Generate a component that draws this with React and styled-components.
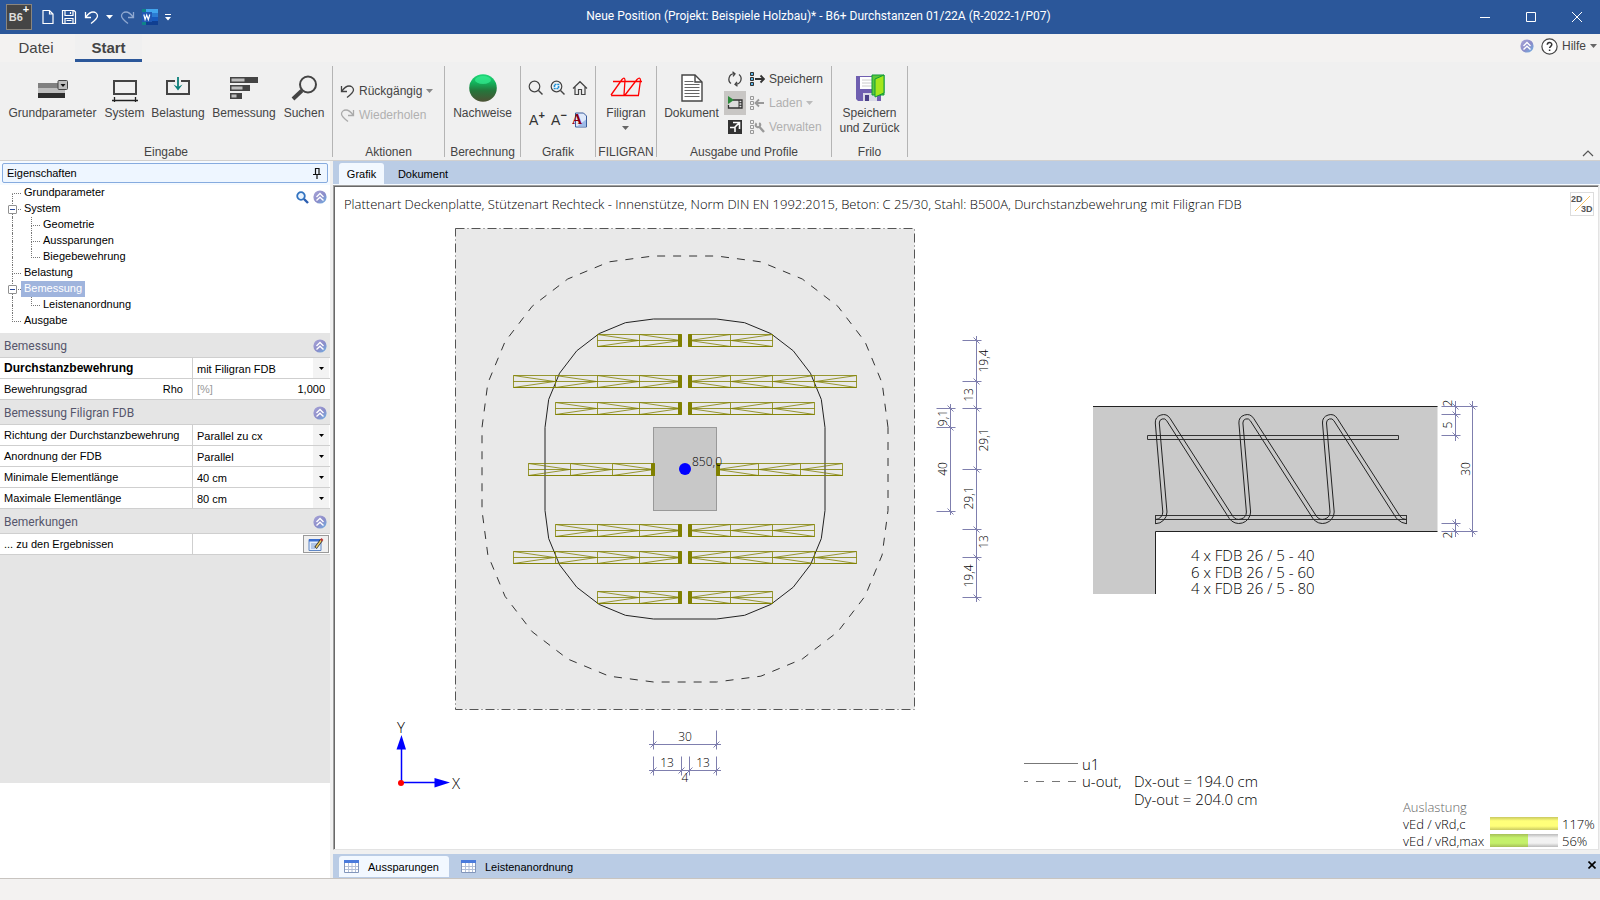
import React from 'react'
import styled, { createGlobalStyle } from 'styled-components'

const uiFont = '"Liberation Sans", Arial, sans-serif'
const segoe = '"Open Sans", "Noto Sans", sans-serif'
const captionFont = 'Roboto, "Open Sans", sans-serif'

const ROWS = [
    { y: 340, cells: 2 },
    { y: 381, cells: 4 },
    { y: 408, cells: 3 },
    { y: 469, cells: 3, middle: true },
    { y: 530, cells: 3 },
    { y: 557, cells: 4 },
    { y: 597, cells: 2 },
]

const TREE = [
    { label: 'Grundparameter', first: true },
    { label: 'System', open: true },
    { label: 'Geometrie', child: true },
    { label: 'Aussparungen', child: true },
    { label: 'Biegebewehrung', child: true, lastChild: true },
    { label: 'Belastung' },
    { label: 'Bemessung', open: true, selected: true },
    { label: 'Leistenanordnung', child: true, lastChild: true },
    { label: 'Ausgabe', last: true },
]

/* ---------- icons ---------- */

const Caret = ({ color = '#666' }) => (
    <svg width="7" height="4" viewBox="0 0 7 4"><path d="M0 0h7L3.5 4z" fill={color} /></svg>
)

const Badge = () => (
    <svg width="14" height="14" viewBox="0 0 14 14">
        <defs>
            <linearGradient id="badge" x1="0" y1="0" x2="1" y2="1">
                <stop offset="0" stopColor="#a9a5d8" />
                <stop offset=".55" stopColor="#8b8cc9" />
                <stop offset="1" stopColor="#6fb4e6" />
            </linearGradient>
        </defs>
        <circle cx="7" cy="7" r="6.6" fill="url(#badge)" />
        <path d="M3.5 7L7 3.6 10.500 7M3.500 10.600L7 7.200l3.500 3.400" fill="none" stroke="#fff" strokeWidth="1.400" />
    </svg>
)

const UndoIcon = ({ color, flip }) => (
    <svg width="15" height="16" viewBox="0 0 15 16">
        <path
            d="M1.500 3v5.500H7M1.800 8.200C4.500 4.500 6.500 3 9 3c2.500 0 4.500 1.700 4.500 4 0 2.300-1.500 3.700-6.500 7.500"
            fill="none" stroke={color} strokeWidth="1.300"
            transform={flip ? 'translate(15 0) scale(-1 1)' : undefined}
        />
    </svg>
)

const NewIcon = () => (
    <svg width="12" height="16" viewBox="0 0 12 16">
        <path d="M1 1.500h6.500L11 5v9.500H1zM7.500 1.500V5H11" fill="none" stroke="#fff" strokeWidth="1.200" />
    </svg>
)

const SaveIcon = () => (
    <svg width="16" height="16" viewBox="0 0 16 16">
        <path d="M1.500 1.500h11.500l1.500 1.500v11.500h-13zM4 1.500v5h8v-5M9.500 3v2M4 14.500V9.500h8v5M5.500 11.500h5" fill="none" stroke="#fff" strokeWidth="1.200" />
    </svg>
)

const WordIcon = () => (
    <svg width="16" height="16" viewBox="0 0 16 16">
        <path d="M0 0h16v16H0z" fill="#0e8389" />
        <path d="M4 0h12v4H4z" fill="#41a5ee" />
        <path d="M4 4h12v4H4z" fill="#2b7cd3" />
        <path d="M4 8h12v4H4z" fill="#185abd" />
        <path d="M4 12h12v4H4z" fill="#103f91" />
        <path d="M0 3h10v10H0z" fill="#2059b5" />
        <path d="M1.800 5.500l1.300 5 1.600-4.500 1.600 4.500 1.500-5" fill="none" stroke="#fff" strokeWidth="1.200" />
    </svg>
)

const ParamIcon = () => (
    <svg width="30" height="28" viewBox="0 0 30 28">
        <path d="M0 9h20v5H0z" fill="#808080" />
        <path d="M0 14h27v5H0z" fill="#bdbdbd" />
        <path d="M0 19h27v5H0z" fill="#2d2d2d" />
        <rect x="20" y="6.500" width="9.500" height="9" rx="1" fill="#bdbdbd" stroke="#444" />
        <path d="M22.500 10h5l-2.500 3z" fill="#111" />
    </svg>
)

const SystemIcon = () => (
    <svg width="28" height="28" viewBox="0 0 28 28">
        <path d="M3 7h22v13H3z" fill="none" stroke="#444" strokeWidth="2" />
        <path d="M1 26.500h26M3.500 23v5M24.500 23v5" stroke="#222" strokeWidth="1.300" />
    </svg>
)

const LoadIcon = () => (
    <svg width="28" height="28" viewBox="0 0 28 28">
        <path d="M3 7h22v13H3z" fill="none" stroke="#444" strokeWidth="2" />
        <path d="M11 5h6v4h-6z" fill="#f0f0f0" />
        <path d="M14 3v11" stroke="#0b7f7a" strokeWidth="1.800" />
        <path d="M9.500 10.500l4.500 2.500 4.500-2.500-4.500 6z" fill="#0b7f7a" />
    </svg>
)

const DesignIcon = () => (
    <svg width="30" height="28" viewBox="0 0 30 28">
        <path d="M1 3h28v6H1zM1 11h20v6H1zM1 19h12v6H1z" fill="#444" />
        <path d="M2.500 4.500h13v3h-13zM2.500 12.500h11v3h-11zM2.500 20.500h5v3h-5z" fill="#bdbdbd" />
    </svg>
)

const FindIcon = () => (
    <svg width="28" height="28" viewBox="0 0 28 28">
        <circle cx="18" cy="10.500" r="8" fill="none" stroke="#444" strokeWidth="2" />
        <path d="M12 16.500L3 25" stroke="#444" strokeWidth="4" />
    </svg>
)

const BallIcon = () => (
    <svg width="28" height="28" viewBox="0 0 28 28">
        <defs>
            <linearGradient id="ball" x1="0" y1="0" x2="0" y2="1">
                <stop offset="0" stopColor="#1fd878" />
                <stop offset=".3" stopColor="#12b45c" />
                <stop offset=".6" stopColor="#25753b" />
                <stop offset="1" stopColor="#4d5134" />
            </linearGradient>
        </defs>
        <circle cx="14" cy="14" r="13.800" fill="url(#ball)" />
        <ellipse cx="14" cy="6" rx="8" ry="4" fill="#3cf59a" opacity=".6" />
    </svg>
)

const FiligranIcon = () => (
    <svg width="34" height="24" viewBox="0 0 34 24">
        <path d="M4 5.500h29M2 19.500h28M2 19L13 3.500Q15.500.500 16 4l-1 15M16 19L28 3.500Q31 .500 31.500 4l-2 15" fill="none" stroke="#f00" strokeWidth="1.300" />
    </svg>
)

const DocIcon = () => (
    <svg width="22" height="28" viewBox="0 0 22 28">
        <path d="M1 1h13l7 7v19H1z" fill="#fff" stroke="#444" strokeWidth="1.400" />
        <path d="M14 1v7h7" fill="none" stroke="#444" strokeWidth="1.400" />
        <path d="M3.500 7.500h9M3.500 10.500h15M3.500 13.500h15M3.500 16.500h15M3.500 19.500h15M3.500 22.500h15" stroke="#666" />
    </svg>
)

const SaveBackIcon = () => (
    <svg width="30" height="28" viewBox="0 0 30 28">
        <path d="M1 2h25v25H3l-2-2z" fill="#6f5fb0" />
        <path d="M5 3h14v12H5z" fill="#fff" />
        <path d="M7 6h10M7 9h10M7 12h10" stroke="#ccc" />
        <path d="M8 19h14v8H8z" fill="#d9d9e6" />
        <path d="M10 21h4v6h-4z" fill="#4a3f86" />
        <path d="M17 1h12v20H17z" fill="#5cc83a" stroke="#0f9b38" />
        <path d="M20 5l9-4v18l-9 4z" fill="#a5e61c" stroke="#0f9b38" />
    </svg>
)

const ZoomIcon = ({ fit }) => (
    <svg width="16" height="16" viewBox="0 0 16 16">
        <circle cx="6.500" cy="6.500" r="5.300" fill="none" stroke="#444" strokeWidth="1.200" />
        <path d="M10.500 10.500l4 4" stroke="#444" strokeWidth="1.500" />
        {fit && <path d="M4.500 4.500h4v4h-4z" fill="#fff" stroke="#1d8fd6" strokeWidth="1.600" strokeDasharray="2 .7" />}
    </svg>
)

const HomeIcon = () => (
    <svg width="16" height="16" viewBox="0 0 16 16">
        <path d="M1 8.500L8 1.700l7 6.800M3 7v7.500h3.500V9.500h3v5H13V7" fill="none" stroke="#444" strokeWidth="1.200" />
    </svg>
)

const ColorDocIcon = () => (
    <svg width="16" height="16" viewBox="0 0 16 16">
        <path d="M3.500 1h8l3 3v11h-11z" fill="#dfe9fa" stroke="#3a5c9c" />
        <path d="M5 14.500h9v-7z" fill="#9dbbe8" />
        <text x="0" y="12" fontFamily="Liberation Serif, serif" fontWeight="700" fontSize="14" fill="#8b0012">A</text>
    </svg>
)

const RefreshIcon = () => (
    <svg width="16" height="16" viewBox="0 0 16 16">
        <path d="M4 12.500A5.500 5.500 0 0 1 7 2.700M12 3.500a5.500 5.500 0 0 1-3 9.800M5.500.800L8 2.800 6 5.300M10.500 15.300L8 13.300l2-2.500" fill="none" stroke="#444" strokeWidth="1.300" />
    </svg>
)

const PlayIcon = () => (
    <svg width="16" height="16" viewBox="0 0 16 16">
        <path d="M6 5h9v8H1.500V10" fill="#ddd" stroke="#333" strokeWidth="1.300" />
        <path d="M12 5v8M12 7.700h3M12 10.300h3" stroke="#333" />
        <path d="M1 1l6 4-6 4z" fill="#2b8a3a" />
    </svg>
)

const ExpandIcon = () => (
    <svg width="14" height="14" viewBox="0 0 14 14">
        <path d="M0 0h14v14H0z" fill="#333" />
        <path d="M5 2.500h6.500V9M11.500 2.500L6 8M2 7.500h5V12" fill="none" stroke="#fff" strokeWidth="1.600" />
    </svg>
)

const ProfileIcon = ({ kind }) => {
    const c = kind === 'save' ? '#333' : '#999'
    return (
        <svg width="15" height="16" viewBox="0 0 15 16">
            <path d="M.5 1.500h3v3h-3zM.5 6.500h3v3h-3zM.5 11.500h3v3h-3z" fill={kind === 'save' ? '#5ab4e6' : 'none'} stroke={c} />
            {kind === 'save' && <path d="M5 8h9M10.500 4.500L14 8l-3.500 3.500" fill="none" stroke={c} strokeWidth="1.800" />}
            {kind === 'load' && <path d="M14 8H6M9 4.500L5.500 8 9 11.500" fill="none" stroke={c} strokeWidth="1.800" />}
            {kind === 'tool' && (
                <>
                    <circle cx="8" cy="6" r="2.200" fill="none" stroke={c} strokeWidth="2" strokeDasharray="10 4" transform="rotate(-60 8 6)" />
                    <path d="M9.500 8l4.500 5" stroke={c} strokeWidth="2.400" />
                </>
            )}
        </svg>
    )
}

const HelpIcon = () => (
    <svg width="17" height="17" viewBox="0 0 17 17">
        <circle cx="8.500" cy="8.500" r="7.600" fill="#fff" stroke="#444" strokeWidth="1.200" />
        <path d="M6.300 6.800c0-3 4.500-3 4.500-.3 0 1.800-2.200 1.800-2.200 3.600M8.600 11.500v1.500" fill="none" stroke="#333" strokeWidth="1.500" />
    </svg>
)

const PinIcon = () => (
    <svg width="9" height="11" viewBox="0 0 9 11">
        <path d="M2.500 6V.5H6V6M0 6.500h8M4 6.500V11M6 0v6" fill="none" stroke="#111" strokeWidth="1.200" />
    </svg>
)

const BlueSearch = () => (
    <svg width="13" height="13" viewBox="0 0 13 13">
        <circle cx="5" cy="5" r="3.800" fill="#eaf4ff" stroke="#3273c0" strokeWidth="1.800" />
        <path d="M8 8l4 4" stroke="#2a5db0" strokeWidth="2.400" />
    </svg>
)

const NoteIcon = () => (
    <svg width="16" height="13" viewBox="0 0 16 13">
        <path d="M1 1.500h12V12.500H1z" fill="#e6effc" stroke="#5f86c4" />
        <path d="M1 1h12v2.500H1z" fill="#3a6ed0" />
        <path d="M3 6h6M3 8h5M3 10h4" stroke="#7b9ed2" />
        <path d="M7.500 10l6-8" stroke="#333" strokeWidth="3" />
        <path d="M8 9.500l5.500-7.500" stroke="#f0d060" strokeWidth="1.400" />
        <path d="M13 2.500l1.500-1.500" stroke="#b33" strokeWidth="2.500" />
    </svg>
)

const GridIcon = () => (
    <svg width="15" height="13" viewBox="0 0 15 13">
        <path d="M.5.500h14v12H.5z" fill="#fff" stroke="#8296bb" />
        <path d="M0 0h15v3H0z" fill="#4a7bdc" />
        <path d="M1 6.500h13M1 9.500h13M4.500 3v9M8 3v9M11.500 3v9" stroke="#b3c0d8" />
    </svg>
)

/* ---------- drawing ---------- */

function Leiste({ y, cells, middle }) {
    const left = middle ? 654 : 681
    const right = middle ? 716 : 688
    const shapes = []
    for (let i = 0; i < cells; i++) {
        const l = left - i * 42
        const r = right + i * 42
        shapes.push(`M${l} ${y - 6}H${l - 42}V${y + 6}H${l}L${l - 42} ${y + 6}L${l - 1} ${y}L${l - 42} ${y - 6}M${l - 42} ${y}H${l}`)
        shapes.push(`M${r} ${y - 6}H${r + 42}V${y + 6}H${r}L${r + 42} ${y + 6}L${r + 1} ${y}L${r + 42} ${y - 6}M${r + 42} ${y}H${r}`)
    }
    return (
        <g transform="translate(.5 .5)">
            <path d={shapes.join('')} fill="none" stroke="#808000" strokeWidth=".8" />
            <path d={`M${left - 3} ${y - 6}h3v12h-3zM${right} ${y - 6}h3v12h-3z`} fill="#808000" stroke="#808000" />
        </g>
    )
}

// straight sides along the column, corners in steps of 15 degrees
function perimeter(r) {
    const pts = []
    const corners = [[716.5, 427.5, 0], [653.5, 427.5, 90], [653.5, 510.5, 180], [716.5, 510.5, 270]]
    corners.forEach(([cx, cy, start]) => {
        for (let a = 0; a <= 90; a += 15) {
            const rad = ((start + a) * Math.PI) / 180
            pts.push(`${cx + r * Math.cos(rad)},${cy - r * Math.sin(rad)}`)
        }
    })
    return pts.join(' ')
}

function VDim({ x, ticks, from, to, wide }) {
    const list = ticks.map((y) => `M${wide || x - 14} ${y}H${x + 5}M${x - 3} ${y - 3}l6 6`).join('')
    return <DimLine d={`M${x} ${from}V${to}${list}`} />
}

function HDim({ y, ticks }) {
    const list = ticks.map((x) => `M${x} ${y - 14}V${y + 5}M${x - 3} ${y + 3}l6 -6`).join('')
    return <DimLine d={`M649 ${y}H721${list}`} />
}

function VText({ x, y, children }) {
    return <DimText transform={`translate(${x} ${y}) rotate(-90)`}>{children}</DimText>
}

function truss() {
    const edge = (a, b, c, d, peakR, valleyR, up, low) => {
        let s = `M1155.500 ${low}A${valleyR} ${valleyR} 0 0 0 ${up} 512`
        for (let i = 0; i < 3; i++) {
            const dx = i * 83.6
            s += `L${a + dx} 423A${peakR} ${peakR} 0 0 1 ${b + dx} ${c}L${d[0] + dx} ${d[1]}`
            s += i < 2
                ? `A${valleyR} ${valleyR} 0 0 0 ${up + dx + 83.6} 512`
                : `Q${1402} ${low} 1406.500 ${low}`
        }
        return s
    }
    return edge(1155.3, 1170, 418.3, [1232.8, 516.2], 8, 7.5, 1162.8, 519.5)
        + edge(1159.3, 1166.7, 420.7, [1229.3, 518.5], 4, 11.7, 1167, 523.7)
}

function Drawing() {
    return (
        <Sheet viewBox="334 186 1264 663" preserveAspectRatio="xMinYMin meet">
            <rect x="455.500" y="228.500" width="459" height="481" fill="#e9e9e9" stroke="#555" strokeDasharray="9 3 1 3" />
            <polygon points={perimeter(171.5)} fill="none" stroke="#333" strokeDasharray="8 8" />
            <polygon points={perimeter(108.5)} fill="none" stroke="#222" />
            <rect x="653.500" y="427.500" width="63" height="83" fill="#c8c8c8" stroke="#999" />
            {ROWS.map((row) => <Leiste key={row.y} {...row} />)}
            <circle cx="685" cy="469" r="6" fill="#00f" />
            <DimText $start x="692" y="466">850,0</DimText>

            <VDim x={976.5} from={336} to={602} ticks={[340.5, 381.5, 408.5, 469.5, 529.5, 557.5, 597.5]} />
            <VDim x={950.5} from={404} to={515} ticks={[408.5, 427.5, 511.5]} />
            <VText x={988} y={361}>19,4</VText>
            <VText x={973} y={395}>13</VText>
            <VText x={988} y={440}>29,1</VText>
            <VText x={973} y={498}>29,1</VText>
            <VText x={988} y={542}>13</VText>
            <VText x={973} y={576}>19,4</VText>
            <VText x={947} y={418}>9,1</VText>
            <VText x={947} y={469}>40</VText>

            <HDim y={744.5} ticks={[653.5, 716.5]} />
            <HDim y={770.5} ticks={[653.5, 681.5, 689.5, 716.5]} />
            <DimText x="685" y="741">30</DimText>
            <DimText x="667" y="767">13</DimText>
            <DimText x="703" y="767">13</DimText>
            <DimText x="685" y="782">4</DimText>

            <path d="M401.500 783V748M401.500 782.500H436" stroke="#00f" strokeWidth="1.500" />
            <path d="M396.500 749.500L401.500 735l4.500 14.500zM434.500 778l15.500 4.500-15.500 5z" fill="#00f" />
            <circle cx="401" cy="783" r="3" fill="#f00" />
            <NoteText x="397" y="733">Y</NoteText>
            <NoteText x="452" y="789">X</NoteText>

            <path d="M1093 406h344.500v125.500H1155.500V594H1093z" fill="#cacaca" />
            <path d="M1093 406.500H1437.500M1437.500 531.500H1155.500V594" fill="none" stroke="#222" />
            <path d="M1147.500 435.500h251v4h-251zM1155.500 515.500h251v4h-251zM1155.500 515v9M1406.500 515v9" fill="none" stroke="#333" />
            <path d={truss()} fill="none" stroke="#222" />
            <NoteText x="1191" y="561">4 x FDB 26 / 5 - 40</NoteText>
            <NoteText x="1191" y="578">6 x FDB 26 / 5 - 60</NoteText>
            <NoteText x="1191" y="594">4 x FDB 26 / 5 - 80</NoteText>

            <VDim x={1455.5} from={401} to={441} ticks={[406.5, 414.5, 435.5]} />
            <VDim x={1455.5} from={519} to={537} ticks={[523.5, 531.5]} />
            <VDim x={1472.5} from={401} to={537} ticks={[406.5, 531.5]} wide={1442} />
            <VText x={1452} y={403}>2</VText>
            <VText x={1452} y={425}>5</VText>
            <VText x={1470} y={469}>30</VText>
            <VText x={1452} y={535}>2</VText>

            <path d="M1024 763.500h54" stroke="#777" />
            <path d="M1024 781.500h54" stroke="#777" strokeDasharray="8 8" strokeDashoffset="4" />
            <NoteText x="1082" y="770">u1</NoteText>
            <NoteText x="1082" y="787">u-out,</NoteText>
            <NoteText x="1134" y="787">Dx-out = 194.0 cm</NoteText>
            <NoteText x="1134" y="805">Dy-out = 204.0 cm</NoteText>
        </Sheet>
    )
}

/* ---------- panels ---------- */

function SectionHead({ children }) {
    return (
        <SectionBar>
            <h3>{children}</h3>
            <IconButton aria-label={`${children} einklappen`}><Badge /></IconButton>
        </SectionBar>
    )
}

function SelectRow({ id, label, value, strong }) {
    return (
        <PropRow>
            <PropLabel htmlFor={id} $strong={strong}>{label}</PropLabel>
            <SelectCell>
                <select id={id} defaultValue={value}><option>{value}</option></select>
                <span><Caret color="#000" /></span>
            </SelectCell>
        </PropRow>
    )
}

function Sidebar() {
    return (
        <Side>
            <SideTitleWrap>
                <SideTitle>
                    <h2>Eigenschaften</h2>
                    <IconButton aria-label="Anheften"><PinIcon /></IconButton>
                </SideTitle>
            </SideTitleWrap>
            <Tree>
                {TREE.map((node) => (
                    <TreeRow key={node.label}>
                        <Guide $from={node.first} $to={node.last} $dash={!node.child} />
                        {node.child && <Guide $child $to={node.lastChild} $dash />}
                        {node.open && <Toggle aria-label={`${node.label} zuklappen`} />}
                        <TreeLink href="#" $selected={node.selected}>{node.label}</TreeLink>
                    </TreeRow>
                ))}
                <TreeTools>
                    <IconButton aria-label="Suchen"><BlueSearch /></IconButton>
                    <IconButton aria-label="Alles einklappen"><Badge /></IconButton>
                </TreeTools>
            </Tree>
            <SectionHead>Bemessung</SectionHead>
            <SelectRow id="durchstanz" label="Durchstanzbewehrung" value="mit Filigran FDB" strong />
            <PropRow>
                <PropLabel htmlFor="rho">Bewehrungsgrad<span>Rho</span></PropLabel>
                <NumberCell>
                    <span>[%]</span>
                    <input id="rho" defaultValue="1,000" />
                </NumberCell>
            </PropRow>
            <SectionHead>Bemessung Filigran FDB</SectionHead>
            <SelectRow id="richtung" label="Richtung der Durchstanzbewehrung" value="Parallel zu cx" />
            <SelectRow id="anordnung" label="Anordnung der FDB" value="Parallel" />
            <SelectRow id="minlen" label="Minimale Elementlänge" value="40 cm" />
            <SelectRow id="maxlen" label="Maximale Elementlänge" value="80 cm" />
            <SectionHead>Bemerkungen</SectionHead>
            <PropRow>
                <PropLabel htmlFor="notiz">... zu den Ergebnissen</PropLabel>
                <NoteCell><button id="notiz" aria-label="Bearbeiten"><NoteIcon /></button></NoteCell>
            </PropRow>
            <SideRest />
            <SideFoot />
        </Side>
    )
}

function BigButton({ icon, width, children }) {
    return (
        <Big $width={width}>
            <i>{icon}</i>
            <span>{children}</span>
        </Big>
    )
}

function Ribbon() {
    return (
        <RibbonBar>
            <Group $width={333}>
                <GroupBody $pad={3}>
                    <BigButton icon={<ParamIcon />} width={99}>Grundparameter</BigButton>
                    <BigButton icon={<SystemIcon />} width={45}>System</BigButton>
                    <BigButton icon={<LoadIcon />} width={62}>Belastung</BigButton>
                    <BigButton icon={<DesignIcon />} width={70}>Bemessung</BigButton>
                    <BigButton icon={<FindIcon />} width={50}>Suchen</BigButton>
                </GroupBody>
                <h4>Eingabe</h4>
            </Group>
            <Group $width={112}>
                <GroupBody>
                    <Stack $top={13} $pad={7}>
                        <Small><UndoIcon color="#444" />Rückgängig<Caret color="#888" /></Small>
                        <Small disabled><UndoIcon color="#aaa" flip />Wiederholen</Small>
                    </Stack>
                </GroupBody>
                <h4>Aktionen</h4>
            </Group>
            <Group $width={76}>
                <GroupBody><BigButton icon={<BallIcon />} width={75}>Nachweise</BigButton></GroupBody>
                <h4>Berechnung</h4>
            </Group>
            <Group $width={75}>
                <ToolGrid>
                    <IconButton aria-label="Zoom"><ZoomIcon /></IconButton>
                    <IconButton aria-label="Alles zeigen"><ZoomIcon fit /></IconButton>
                    <IconButton aria-label="Startansicht"><HomeIcon /></IconButton>
                    <FontButton>A<sup>+</sup></FontButton>
                    <FontButton>A<sup>−</sup></FontButton>
                    <IconButton aria-label="Schriftfarbe"><ColorDocIcon /></IconButton>
                </ToolGrid>
                <h4>Grafik</h4>
            </Group>
            <Group $width={61}>
                <GroupBody>
                    <BigButton icon={<FiligranIcon />} width={60}>Filigran<br /><Caret /></BigButton>
                </GroupBody>
                <h4>FILIGRAN</h4>
            </Group>
            <Group $width={175}>
                <GroupBody $pad={2}>
                    <BigButton icon={<DocIcon />} width={65}>Dokument</BigButton>
                    <Stack $top={1}>
                        <Square aria-label="Aktualisieren"><RefreshIcon /></Square>
                        <Square $on aria-label="Vorschau"><PlayIcon /></Square>
                        <Square aria-label="Vergrößern"><ExpandIcon /></Square>
                    </Stack>
                    <Stack $top={1} $pad={4}>
                        <Small><ProfileIcon kind="save" />Speichern</Small>
                        <Small disabled><ProfileIcon kind="load" />Laden<Caret color="#bbb" /></Small>
                        <Small disabled><ProfileIcon kind="tool" />Verwalten</Small>
                    </Stack>
                </GroupBody>
                <h4>Ausgabe und Profile</h4>
            </Group>
            <Group $width={76}>
                <GroupBody>
                    <BigButton icon={<SaveBackIcon />} width={75}>Speichern<br />und Zurück</BigButton>
                </GroupBody>
                <h4>Frilo</h4>
            </Group>
            <CollapseButton aria-label="Menüband einklappen">
                <svg width="12" height="7" viewBox="0 0 12 7"><path d="M1 6l5-5 5 5" fill="none" stroke="#555" strokeWidth="1.200" /></svg>
            </CollapseButton>
        </RibbonBar>
    )
}

function App() {
    return (
        <>
            <GlobalStyle />
            <Window>
                <TitleBar>
                    <QuickBar>
                        <Logo>B6<b>+</b></Logo>
                        <IconButton aria-label="Neu"><NewIcon /></IconButton>
                        <IconButton aria-label="Speichern"><SaveIcon /></IconButton>
                        <IconButton aria-label="Rückgängig"><UndoIcon color="#fff" /></IconButton>
                        <IconButton aria-label="Verlauf"><Caret color="#fff" /></IconButton>
                        <IconButton aria-label="Wiederholen"><UndoIcon color="#8fa8d0" flip /></IconButton>
                        <IconButton aria-label="Word"><WordIcon /></IconButton>
                        <IconButton aria-label="Anpassen">
                            <svg width="6" height="7" viewBox="0 0 6 7"><path d="M0 0h6v1H0zM0 3h6L3 6.500z" fill="#fff" /></svg>
                        </IconButton>
                    </QuickBar>
                    <h1>Neue Position (Projekt: Beispiele Holzbau)* - B6+ Durchstanzen 01/22A (R-2022-1/P07)</h1>
                    <WinButton aria-label="Minimieren"><svg width="10" height="10"><path d="M0 5.500h10" stroke="#fff" /></svg></WinButton>
                    <WinButton aria-label="Maximieren"><svg width="10" height="10"><path d="M.5.500h9v9h-9z" fill="none" stroke="#fff" /></svg></WinButton>
                    <WinButton aria-label="Schließen"><svg width="10" height="10"><path d="M0 0l10 10M10 0L0 10" stroke="#fff" /></svg></WinButton>
                </TitleBar>
                <MenuBar>
                    <MenuTab $width={72}>Datei</MenuTab>
                    <MenuTab $width={67} $active>Start</MenuTab>
                    <Help>
                        <IconButton aria-label="Einklappen"><Badge /></IconButton>
                        <Small><HelpIcon />Hilfe<Caret /></Small>
                    </Help>
                </MenuBar>
                <Ribbon />
                <Work>
                    <Sidebar />
                    <Main>
                        <TabStrip>
                            <ViewTab $active $width={45}>Grafik</ViewTab>
                            <ViewTab $width={78}>Dokument</ViewTab>
                        </TabStrip>
                        <Canvas>
                            <Drawing />
                            <Headline>Plattenart Deckenplatte, Stützenart Rechteck - Innenstütze, Norm DIN EN 1992:2015, Beton: C 25/30, Stahl: B500A, Durchstanzbewehrung mit Filigran FDB</Headline>
                            <DimSwitch>
                                <svg width="22" height="22" viewBox="0 0 22 22">
                                    <path d="M4 18L19 3" stroke="#f5c46a" />
                                    <text x="0" y="9" fontFamily="Liberation Sans" fontSize="9" fontWeight="700" fill="#555">2D</text>
                                    <text x="10" y="19" fontFamily="Liberation Sans" fontSize="9" fontWeight="700" fill="#555">3D</text>
                                </svg>
                            </DimSwitch>
                            <Usage>
                                <em>Auslastung</em>
                                <span>vEd / vRd,c</span><Meter $color="#ffff7a"><i style={{ width: '100%' }} /></Meter><span>117%</span>
                                <span>vEd / vRd,max</span><Meter $color="#c4f06a"><i style={{ width: '56%' }} /></Meter><span>56%</span>
                            </Usage>
                        </Canvas>
                        <TabStrip $bottom>
                            <ViewTab $active $left $width={110}><GridIcon />Aussparungen</ViewTab>
                            <ViewTab $left $gap={7} $width={134}><GridIcon />Leistenanordnung</ViewTab>
                            <CloseTab aria-label="Schließen">
                                <svg width="8" height="8" viewBox="0 0 8 8"><path d="M.5.500l7 7M7.500.500l-7 7" stroke="#000" strokeWidth="1.600" /></svg>
                            </CloseTab>
                        </TabStrip>
                    </Main>
                </Work>
                <StatusBar />
            </Window>
        </>
    )
}

const GlobalStyle = createGlobalStyle`
    *{
        box-sizing: border-box;
    }
    body{
        margin: 0;
        font-family: ${uiFont};
        font-size: 12px;
        color: #444;
        background-color: #f0f0f0;
    }
    button, input, select{
        font: inherit;
        color: inherit;
        border: none;
        background: none;
        padding: 0;
        margin: 0;
        outline: none;
    }
    h1, h2, h3, h4{
        margin: 0;
        font-weight: 400;
        font-size: inherit;
    }
    svg{
        display: block;
        flex: none;
    }
`

const Window = styled.div`
    display: flex;
    flex-direction: column;
    min-height: 100vh;
`

const IconButton = styled.button`
    display: flex;
    align-items: center;
    justify-content: center;
`

const TitleBar = styled.header`
    display: flex;
    align-items: center;
    height: 34px;
    background-color: #2b579a;
    h1{
        flex: 1;
        text-align: center;
        font-family: ${captionFont};
        font-size: 12px;
        line-height: 16px;
        color: #fff;
        padding-bottom: 2px;
    }
`

const QuickBar = styled.div`
    display: flex;
    align-items: center;
    gap: 7px;
    width: 175px;
    padding-left: 6px;
`

const Logo = styled.div`
    display: flex;
    justify-content: center;
    align-items: center;
    width: 26px;
    height: 26px;
    margin-right: 3px;
    border: 1px solid #8a857e;
    background-color: #454545;
    color: #ddd;
    font-size: 11px;
    font-weight: 700;
    b{
        font-size: 11px;
        color: #fff;
        align-self: flex-start;
        line-height: 8px;
    }
`

const WinButton = styled(IconButton)`
    width: 46px;
    height: 34px;
`

const MenuBar = styled.nav`
    display: flex;
    height: 28px;
    background-color: #f3f2f1;
`

const MenuTab = styled.button`
    width: ${(p) => p.$width}px;
    margin-right: ${(p) => (p.$active ? 0 : 3)}px;
    padding-top: 2px;
    font-size: 15px;
    font-weight: ${(p) => (p.$active ? 700 : 400)};
    border-bottom: 3px solid ${(p) => (p.$active ? '#2b579a' : 'transparent')};
    background-color: ${(p) => (p.$active ? '#f0f0f0' : 'transparent')};
`

const Help = styled.div`
    display: flex;
    align-items: center;
    gap: 7px;
    margin-left: auto;
    padding: 0 3px 4px 0;
`

const RibbonBar = styled.section`
    display: flex;
    height: 99px;
    border-bottom: 1px solid #d2d0ce;
    background-color: #f0f0f0;
`

const Group = styled.div`
    display: flex;
    flex-direction: column;
    width: ${(p) => p.$width}px;
    height: 91px;
    margin-top: 4px;
    border-right: 1px solid #b4b4b4;
    h4{
        height: 12px;
        text-align: center;
        line-height: 14px;
        white-space: nowrap;
    }
`

const GroupBody = styled.div`
    display: flex;
    flex: 1;
    padding-left: ${(p) => p.$pad || 0}px;
`

const Big = styled.button`
    display: flex;
    flex-direction: column;
    align-items: center;
    justify-content: flex-start;
    width: ${(p) => p.$width}px;
    padding-top: 7px;
    white-space: nowrap;
    i{
        display: flex;
        align-items: center;
        height: 30px;
        margin-bottom: 3px;
    }
    span{
        line-height: 15px;
    }
    span svg{
        margin: 5px auto 0;
    }
`

const Stack = styled.div`
    display: flex;
    flex-direction: column;
    padding-top: ${(p) => p.$top}px;
    padding-left: ${(p) => p.$pad || 0}px;
`

const Small = styled.button`
    display: flex;
    align-items: center;
    gap: 4px;
    height: 24px;
    white-space: nowrap;
    color: ${(p) => (p.disabled ? '#b0b0b0' : '#444')};
`

const Square = styled(IconButton)`
    width: 22px;
    height: 24px;
    background-color: ${(p) => (p.$on ? '#c8c6c4' : 'transparent')};
`

const ToolGrid = styled.div`
    display: grid;
    grid-template-columns: repeat(3, 22px);
    grid-auto-rows: 32px;
    flex: 1;
    padding: 6px 0 0 4px;
`

const FontButton = styled.button`
    padding-left: 2px;
    font-size: 14px;
    line-height: 14px;
    color: #333;
    sup{
        font-size: 11px;
        line-height: 0;
        font-weight: 700;
    }
`

const CollapseButton = styled(IconButton)`
    align-self: flex-end;
    margin: 0 6px 3px auto;
`

const Work = styled.div`
    display: flex;
    flex: 1;
`

const Side = styled.aside`
    display: flex;
    flex-direction: column;
    width: 333px;
    border-right: 3px solid #f0f0f0;
    background-color: #fff;
    color: #000;
    font-size: 11px;
`

const SideTitleWrap = styled.div`
    padding: 2px;
    background-color: #f5faff;
`

const SideTitle = styled.div`
    display: flex;
    align-items: center;
    justify-content: space-between;
    height: 20px;
    padding: 0 5px 0 4px;
    border: 1px solid #86abdf;
    border-radius: 2px;
    background-color: #eef6ff;
`

const Tree = styled.ul`
    position: relative;
    margin: 0;
    padding: 0 0 4px 12px;
    list-style: none;
`

const TreeRow = styled.li`
    position: relative;
    display: flex;
    height: 16px;
`

const Guide = styled.span`
    display: flex;
    flex-direction: column;
    width: ${(p) => (p.$dash ? 9 : 19)}px;
    &::before, &::after{
        content: '';
        flex: 1;
        border-left: 1px dotted #777;
    }
    &::before{
        border-bottom: ${(p) => (p.$dash ? '1px dotted #777' : 'none')};
        border-left-color: ${(p) => (p.$from ? 'transparent' : '#777')};
    }
    &::after{
        border-left-color: ${(p) => (p.$to ? 'transparent' : '#777')};
    }
`

const Toggle = styled.button`
    position: absolute;
    top: 4px;
    left: -4px;
    display: flex;
    align-items: center;
    justify-content: center;
    width: 9px;
    height: 9px;
    border: 1px solid #919191;
    border-radius: 1px;
    background-color: #fff;
    &::before{
        content: '';
        width: 5px;
        height: 1px;
        background-color: #2b4a9a;
    }
`

const TreeLink = styled.a`
    padding: 0 3px;
    line-height: 15px;
    white-space: nowrap;
    text-decoration: none;
    color: ${(p) => (p.$selected ? '#fff' : '#000')};
    background-color: ${(p) => (p.$selected ? '#9fb4dd' : 'transparent')};
`

const TreeTools = styled.div`
    position: absolute;
    top: 5px;
    right: 3px;
    display: flex;
    gap: 4px;
`

const SectionBar = styled.div`
    display: flex;
    align-items: center;
    justify-content: space-between;
    height: 25px;
    padding: 2px 3px 0 4px;
    border-bottom: 1px solid #cfcfcf;
    background-color: #e5e5e5;
    h3{
        font-family: ${captionFont};
        font-size: 12px;
        line-height: 16px;
        color: #56566c;
    }
`

const PropRow = styled.div`
    display: grid;
    grid-template-columns: 192px 1fr;
    height: 21px;
    border-bottom: 1px solid #cfcfcf;
`

const PropLabel = styled.label`
    display: flex;
    justify-content: space-between;
    align-items: center;
    padding: 0 9px 0 4px;
    white-space: nowrap;
    font-size: ${(p) => (p.$strong ? 12 : 11)}px;
    font-weight: ${(p) => (p.$strong ? 700 : 400)};
`

const Cell = styled.div`
    display: flex;
    align-items: center;
    min-width: 0;
    border-left: 1px solid #cfcfcf;
`

const SelectCell = styled(Cell)`
    select{
        appearance: none;
        flex: 1;
        height: 20px;
        padding: 1px 0 0 4px;
    }
    span{
        display: flex;
        align-items: center;
        justify-content: center;
        width: 16px;
        height: 20px;
        margin-right: 1px;
        background-color: #f3f3f3;
    }
    span svg{
        width: 5px;
        height: 3px;
    }
`

const NumberCell = styled(Cell)`
    padding: 0 5px 0 4px;
    color: #000;
    span{
        color: #999;
    }
    input{
        flex: 1;
        min-width: 0;
        text-align: right;
    }
`

const NoteCell = styled(Cell)`
    justify-content: flex-end;
    padding-right: 1px;
    button{
        display: flex;
        align-items: center;
        justify-content: center;
        width: 26px;
        height: 18px;
        border: 1px solid #9a9a9a;
        background-color: #f0f0f0;
    }
`

const SideRest = styled.div`
    flex: 1;
    background-color: #e5e5e5;
`

const SideFoot = styled.div`
    height: 95px;
    background-color: #fff;
`

const Main = styled.main`
    display: flex;
    flex-direction: column;
    flex: 1;
    min-width: 0;
    color: #000;
`

const TabStrip = styled.div`
    display: flex;
    align-items: flex-end;
    height: 24px;
    margin-top: ${(p) => (p.$bottom ? 4 : 0)}px;
    padding: 0 0 ${(p) => (p.$bottom ? 1 : 0)}px 6px;
    border-bottom: ${(p) => (p.$bottom ? 'none' : '1px solid #f5faff')};
    background-color: #bacce5;
`

const ViewTab = styled.button`
    display: flex;
    align-items: center;
    justify-content: ${(p) => (p.$left ? 'flex-start' : 'center')};
    gap: 9px;
    width: ${(p) => p.$width}px;
    height: 21px;
    margin-left: ${(p) => p.$gap || 0}px;
    padding-left: ${(p) => (p.$left ? 5 : 0)}px;
    font-size: 11px;
    border-radius: 3px 3px 0 0;
    background-color: ${(p) => (p.$active ? '#f2f8ff' : 'transparent')};
`

const CloseTab = styled(IconButton)`
    height: 24px;
    margin-left: auto;
    padding-right: 4px;
`

const Canvas = styled.div`
    display: grid;
    flex: 1;
    margin-right: 1px;
    border: 1px solid #a0a0a0;
    border-right-color: #e3e3e3;
    border-bottom-color: #e3e3e3;
    background-color: #fff;
    box-shadow: inset 1px 1px 0 #696969;
    font-family: ${segoe};
    font-weight: 300;
    > *{
        grid-area: 1 / 1;
    }
`

const Sheet = styled.svg`
    width: 100%;
    height: 100%;
    min-height: 0;
`

const Headline = styled.p`
    margin: 0;
    padding: 9px 0 0 10px;
    align-self: start;
    justify-self: start;
    font-size: 13px;
    line-height: 18px;
`

const DimSwitch = styled.button`
    align-self: start;
    justify-self: end;
    margin: 6px 4px 0 0;
    border: 1px solid #ddd;
    background-color: #fff;
`

const Usage = styled.div`
    align-self: end;
    justify-self: end;
    display: grid;
    grid-template-columns: 87px 68px 36px;
    grid-auto-rows: 17px;
    align-items: center;
    padding-right: 4px;
    font-size: 13px;
    em{
        grid-column: 1 / -1;
        font-style: normal;
        color: #666;
    }
    span{
        white-space: nowrap;
    }
    span + div + span{
        padding-left: 4px;
    }
`

const Meter = styled.div`
    height: 13px;
    background: linear-gradient(#bbb, #f2f2f2 30%, #f2f2f2 70%, #bbb);
    i{
        display: block;
        height: 13px;
        background: linear-gradient(rgba(120, 120, 60, .4), transparent 30%, transparent 70%, rgba(120, 120, 60, .4)), ${(p) => p.$color};
    }
`

const DimLine = styled.path`
    fill: none;
    stroke: #7f7fae;
    stroke-width: 1;
`

const DimText = styled.text`
    font-size: 12px;
    text-anchor: ${(p) => (p.$start ? 'start' : 'middle')};
    fill: #000;
`

const NoteText = styled.text`
    font-size: 15px;
    fill: #000;
`

const StatusBar = styled.footer`
    height: 22px;
    border-top: 1px solid #c8c4c0;
    background-color: #f3f2f1;
`

export default App
